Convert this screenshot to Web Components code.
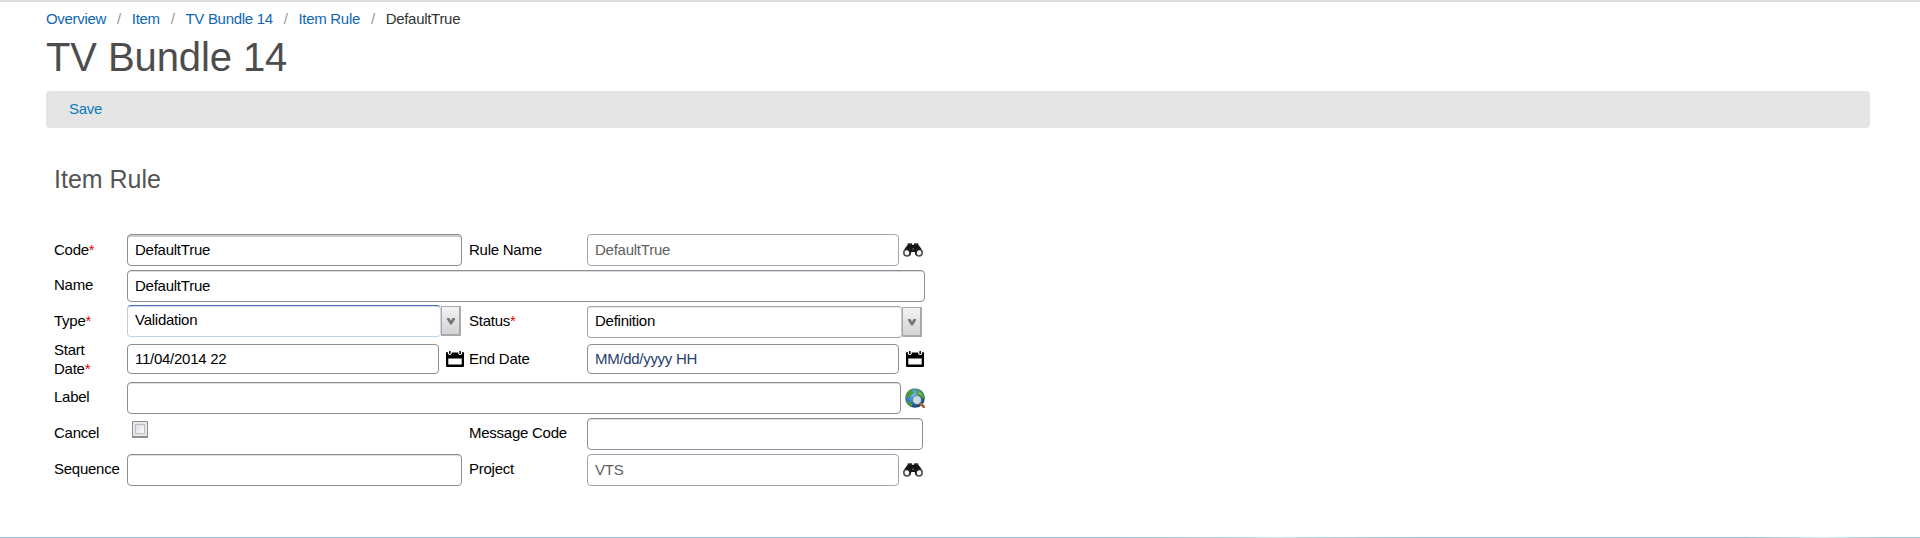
<!DOCTYPE html>
<html lang="en"><head><meta charset="utf-8"><title>TV Bundle 14</title>
<style>html,body{margin:0;height:100%;background:#fff}body{font:15px/19px "Liberation Sans",Arial,sans-serif;color:#000}</style></head><body>
<item-page></item-page>
<script>
const define=(name,html,setup)=>customElements.define(name,class extends HTMLElement{
  connectedCallback(){ if(this.shadowRoot)return;
    this.attachShadow({mode:'open'}).innerHTML=html; if(setup)setup(this,this.shadowRoot); }
});
define('crumb-trail',`<style>:host{display:flex;height:19px;letter-spacing:-.3px;color:#333;white-space:nowrap}
::slotted(a){color:#0f66b4;text-decoration:none}::slotted(i){color:#999;font-style:normal;width:25.7px;text-align:center}</style><slot></slot>`);
define('tool-bar',`<style>:host{display:flex;align-items:center;box-sizing:border-box;height:37px;padding:0 23px 2px;border-radius:4px;background:#e5e5e5;color:#0a7bbd;letter-spacing:-.3px}</style><slot></slot>`);
define('field-label',`<style>:host{display:block;align-self:center;letter-spacing:var(--ls,-.25px);line-height:19px;position:relative;top:var(--dy,-1px)}b{font-weight:400;color:#f00000}b:empty{display:none}</style><slot></slot><b></b>`,
 (h,r)=>{if(h.hasAttribute('required'))r.querySelector('b').textContent='*'});
define('text-box',`<style>:host{display:flex;align-items:center;align-self:center;box-sizing:border-box;width:var(--w,335px);height:32px;padding:0 7px 2px;border:1px solid #8f8f93;border-radius:4px;background:#fff;box-shadow:inset 0 1px #dcdcdc;letter-spacing:-.25px;white-space:nowrap}
:host([deep]){box-shadow:inset 0 2px #ccc}
:host([muted]){color:#606060;border-color:#a3a5b0;box-shadow:none}
:host([date]){height:30px;box-shadow:none;letter-spacing:-.26px}
:host([hint]){color:#24406f;letter-spacing:-.3px}</style><slot></slot>`);
define('select-box',`<style>:host{display:flex;align-self:center;align-items:center;height:32px;width:var(--w);letter-spacing:-.25px}
div{flex:1;box-sizing:border-box;height:32px;border:1px solid #a4a4a6;border-right-color:#c5cad2;border-radius:4px;padding:4px 7px;box-shadow:inset 0 1px #ececec}
:host([focus]) div{border-color:#4a74ad #c5dbef #b9d7ee #c0cbe0;box-shadow:inset 0 1px #cfdced}
span{box-sizing:border-box;width:20px;height:30px;border:1px solid #a9a9ad;border-right-width:2px;border-bottom-width:2px;background:linear-gradient(#f4f4f4,#e2e2e2 50%,#d4d4d4);display:grid;place-items:center}</style>
<div><slot></slot></div><span><svg width="10" height="8" viewBox="0 0 10 8"><path d="M1 1h2.400L5 3.600 6.600 1H9v1.600L5.800 7.500H4.200L1 2.600z" fill="#777"/></svg></span>`);
define('check-box',`<style>:host{display:block;box-sizing:border-box;width:16px;height:17px;border:1px solid #8e8f8f;box-shadow:inset 0 0 0 2px #e6e6e6,inset 0 0 0 3px #b9bdc6;background:linear-gradient(135deg,#c9ced6,#fafafa 75%);border-width:1px 1px 2px}</style>`);
define('find-icon',`<style>:host{display:block;width:20px;height:16px}svg{display:block}</style><svg width="20" height="16" viewBox="0 0 20 16">
<path d="M4.700 2.800V1.300h4.300v1.500h2V1.300h4.300v1.500L18 6.200l1.500 3.300-3 2h-4L11.500 10h-3L7.500 11.500h-4l-3-2L2 6.200z" fill="#151515"/>
<path d="M5 1.700h4M11 1.700h4" stroke="#777" stroke-width=".9"/><path d="M9.200 6h1.600v2.500H9.200z" fill="#4a4a4a"/>
<circle cx="4" cy="10.700" r="3.200" fill="#f4f4f4" stroke="#4c4c4c" stroke-width="1.500"/><circle cx="16" cy="10.700" r="3.200" fill="#f4f4f4" stroke="#4c4c4c" stroke-width="1.500"/>
<path d="M2 6.800Q6 6 8 9v3l-1.700 1.500Q7.500 8 2 7.500zM18 6.800Q14 6 12 9v3l1.700 1.500Q12.500 8 18 7.500z" fill="#1c1c1c"/></svg>`);
define('calendar-icon',`<style>:host{display:block;width:18px;height:16px}svg{display:block}</style><svg width="18" height="16" viewBox="0 0 18 16">
<path d="M1 1h16q1 0 1 1v13q0 1-1 1H1q-1 0-1-1V2q0-1 1-1z" fill="#000"/><path d="M2.300 7.500h13.400v6H2.300z" fill="#fff"/>
<path d="M1.800 0v2.800q2 2.400 4 0V0zM12.200 0v2.800q2 2.400 4 0V0z" fill="#fff"/><path d="M3.800 0v3.100M14.200 0v3.100" stroke="#111" stroke-width="1.600"/><path d="M5.800 0h6.400v1.500H5.800z" fill="#fff"/></svg>`);
define('globe-icon',`<style>:host{display:block;width:20px;height:20px}svg{display:block}</style><svg width="20" height="20" viewBox="0 0 20 20">
<defs><radialGradient id="g" cx=".4" cy=".3" r=".7"><stop offset="0" stop-color="#79bdf0"/><stop offset=".5" stop-color="#3c82cf"/><stop offset="1" stop-color="#163d70"/></radialGradient></defs>
<circle cx="10" cy="10" r="9.800" fill="url(#g)"/><path d="M2 4.500Q5 .8 9 .4L7.500 3 9 5 5.500 7.500 4.500 10 1 9.500Q.7 7 2 4.500zM1 12.500l4 1 2.500 3-1 2.700Q2.500 17 1 12.500zM11.500 1Q17 2 19.300 7.500v4L16.500 9 14 8.500 12 5.500z" fill="#4b9a36"/>
<path d="M12 2.500l4 2.500 1 3-3-2z" fill="#7fc35b"/><path d="M15.500 15.500 19 19" stroke="#a66a38" stroke-width="2.600" stroke-linecap="round"/>
<circle cx="12" cy="12" r="3.600" fill="#c4dff0" stroke="#dcdcdc" stroke-width="1.300"/><circle cx="12" cy="12" r="4.300" fill="none" stroke="#607684" stroke-width=".6"/></svg>`);
define('form-cell',`<style>:host{display:flex;align-items:center;height:100%;gap:var(--gap,4px);position:relative;top:var(--dy,0)}:host([wide]){grid-column:2/5}</style><slot></slot>`);
define('rule-form',`<style>:host{display:grid;grid-template-columns:73px 342px 118px 340px;grid-template-rows:36px 36px 36px 40px 36px 36px 36px;margin-left:8px;width:873px}
.start{width:50px}</style>
<field-label required>Code</field-label><form-cell><text-box deep>DefaultTrue</text-box></form-cell>
<field-label>Rule Name</field-label><form-cell><text-box muted style="--w:312px">DefaultTrue</text-box><find-icon></find-icon></form-cell>
<field-label style="--dy:-2px">Name</field-label><form-cell wide><text-box style="--w:798px">DefaultTrue</text-box></form-cell>
<field-label required style="--dy:-2px">Type</field-label><form-cell style="--dy:-1px"><select-box focus style="--w:334px">Validation</select-box></form-cell>
<field-label required style="--dy:-2px">Status</field-label><form-cell><select-box style="--w:335px">Definition</select-box></form-cell>
<field-label required class="start" style="--dy:-1px">Start Date</field-label><form-cell style="--dy:-1px;--gap:7px"><text-box date style="--w:312px">11/04/2014 22</text-box><calendar-icon></calendar-icon></form-cell>
<field-label style="--dy:-2px">End Date</field-label><form-cell style="--dy:-1px;--gap:7px"><text-box date hint style="--w:312px">MM/dd/yyyy HH</text-box><calendar-icon></calendar-icon></form-cell>
<field-label style="--dy:-2px">Label</field-label><form-cell wide><text-box style="--w:774px"></text-box><globe-icon></globe-icon></form-cell>
<field-label style="--dy:-2px">Cancel</field-label><form-cell style="--dy:-5px"><check-box style="margin-left:5px"></check-box></form-cell>
<field-label style="--dy:-2px">Message Code</field-label><form-cell><text-box style="--w:336px"></text-box></form-cell>
<field-label style="--dy:-2px">Sequence</field-label><form-cell><text-box></text-box></form-cell>
<field-label style="--dy:-2px">Project</field-label><form-cell><text-box muted style="--w:312px">VTS</text-box><find-icon></find-icon></form-cell>`);
define('item-page',`<style>:host{display:flex;flex-direction:column;box-sizing:border-box;height:538px;border-top:2px solid #ddd;padding:7px 50px 0 46px;background:linear-gradient(90deg,#8fc3e0 0 58%,#c6dfea 66.500%,#8fc3e0 74% 91%,#d3e8f2 95%,#9ccbe3 98%) 0 100%/100% 1px no-repeat}
h1,h2{font-weight:400;margin:0}h1{box-sizing:border-box;padding-top:6px;font-size:40px;line-height:46px;height:63px;color:#4d4d4d;letter-spacing:-.1px}
h2{font-size:25px;line-height:30px;margin:36px 0 38px 8px;color:#555;height:30px;letter-spacing:0}</style>
<crumb-trail><a href="#">Overview</a><i>/</i><a href="#">Item</a><i>/</i><a href="#">TV Bundle 14</a><i>/</i><a href="#">Item Rule</a><i>/</i><span>DefaultTrue</span></crumb-trail>
<h1>TV Bundle 14</h1><tool-bar>Save</tool-bar><h2>Item Rule</h2><rule-form></rule-form>`);
</script></body></html>
